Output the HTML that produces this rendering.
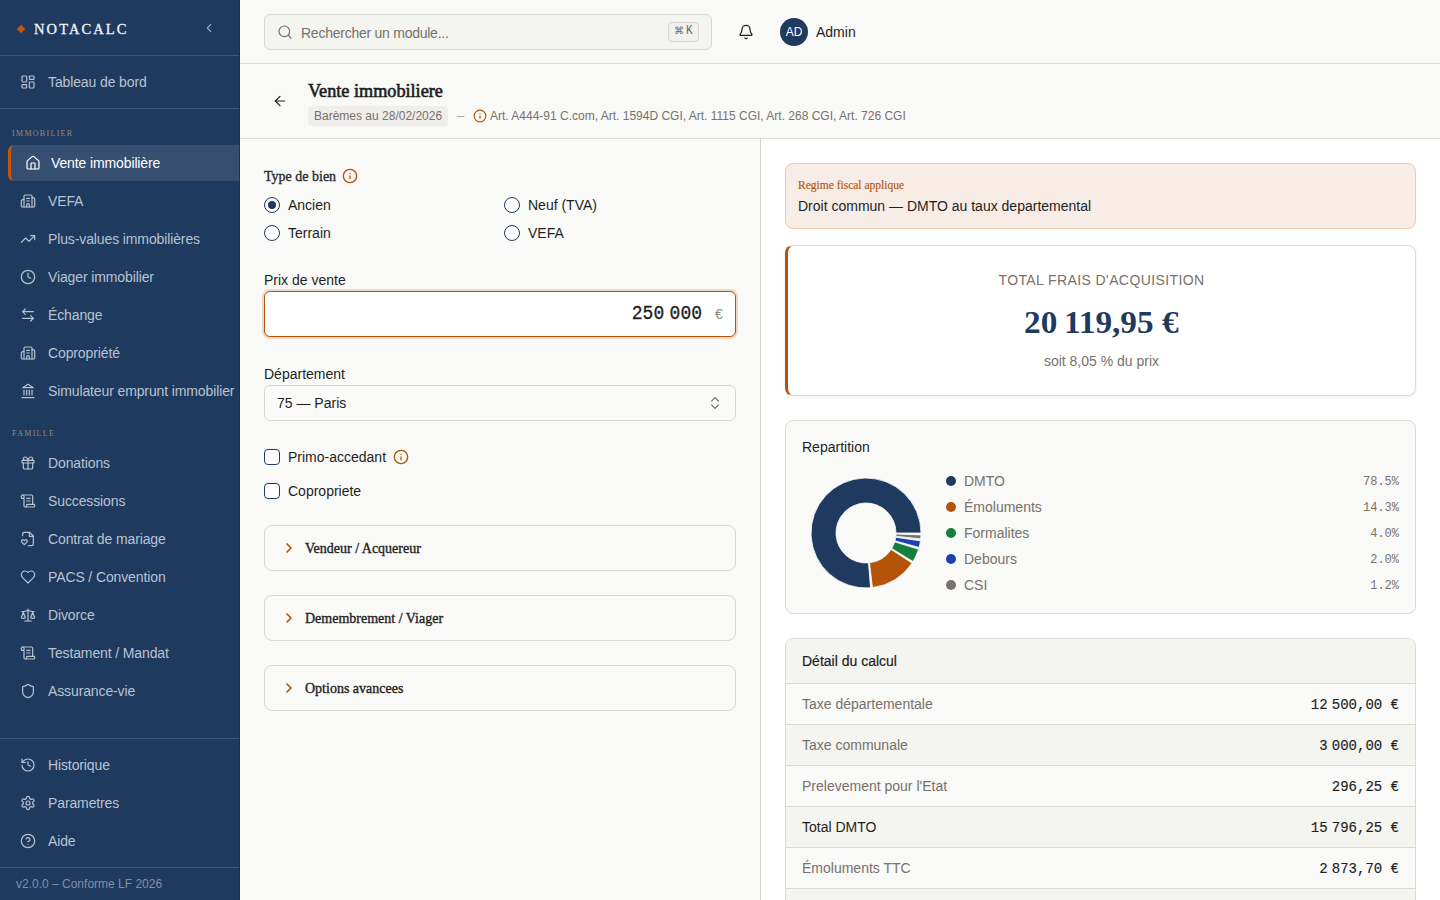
<!DOCTYPE html>
<html lang="fr"><head><meta charset="utf-8"><title>NotaCalc</title>
<style>
*{box-sizing:border-box;margin:0;padding:0}
html,body{width:1440px;height:900px;overflow:hidden}
body{font-family:"Liberation Sans",sans-serif;background:#fafaf8;color:#1f1f1f;position:relative;font-size:14px}
.serif{font-family:"Liberation Serif",serif}
.mono{font-family:"Liberation Mono",monospace}
svg.i{fill:none;stroke:currentColor;stroke-width:2;stroke-linecap:round;stroke-linejoin:round;position:absolute}
.abs{position:absolute;white-space:nowrap}
/* sidebar */
#sb{position:absolute;left:0;top:0;width:240px;height:900px;background:#1e3a5f;color:#b9c3d0}
.hr{position:absolute;left:0;width:239px;height:1px;background:rgba(255,255,255,0.15)}
.nav{position:absolute;left:0;width:240px;height:36px}
.nav svg{left:20px;top:10px;width:16px;height:16px;stroke-width:1.8}
.nav span{position:absolute;left:48px;top:0;line-height:36px;font-size:14px;letter-spacing:-0.12px;white-space:nowrap}
.nav.act{left:8px;width:232px;background:rgba(255,255,255,0.11);border-radius:6px 0 0 6px;border-left:3px solid #c2570c;color:#fff}
.nav.act svg{left:14px}
.nav.act span{left:40px}
.sec{position:absolute;left:12px;font-family:"Liberation Serif",serif;font-size:8px;letter-spacing:1.3px;color:#9a8c78}

.lbl{font-size:14px;line-height:18px;color:#1f1f1f}
.radio{position:absolute;width:16px;height:16px;border:1.5px solid #1e3a5f;border-radius:50%;background:#fff}
.radio.on::after{content:"";position:absolute;left:2.5px;top:2.5px;width:8px;height:8px;border-radius:50%;background:#1e3a5f}
.chk{position:absolute;width:16px;height:16px;border:1.5px solid #1e3a5f;border-radius:4px;background:#fff}
.acc{position:absolute;left:264px;width:472px;height:46px;border:1px solid #d9d7d1;border-radius:8px;background:#f9f9f7}
.acc svg{left:16px;top:14px;width:16px;height:16px;color:#b45309;stroke-width:2.5}
.acc span{position:absolute;left:40px;top:1px;line-height:44px;font-family:"Liberation Serif",serif;font-size:14px;color:#1f1f1f;-webkit-text-stroke:0.35px #1f1f1f;white-space:nowrap}
.leg{position:absolute;left:946px;width:453px;height:18px}
.leg i{position:absolute;left:0;top:4px;width:10px;height:10px;border-radius:50%}
.leg span{position:absolute;left:18px;top:0;font-size:14px;line-height:18px;color:#78716c}
.leg b{position:absolute;right:0;top:1px;font-family:"Liberation Mono",monospace;font-weight:normal;font-size:12px;line-height:18px;color:#78716c}
.row{position:relative;height:41px;border-bottom:1px solid #dcdad4;background:#f9f9f7}
.row.alt{background:#f4f4f0}
.row span{position:absolute;left:16px;top:0;line-height:40px;font-size:14px;color:#78716c}
.row.tot span{color:#1f1f1f}
.row b{position:absolute;right:16px;top:1px;line-height:40px;font-family:"Liberation Mono",monospace;font-weight:normal;font-size:14px;color:#1f1f1f;-webkit-text-stroke:0.15px #1f1f1f}
</style></head>
<body>
<div id="sb">
  <div class="abs" style="left:17px;top:25px;width:8px;height:8px;"><div style="width:6px;height:6px;background:#c2570c;transform:rotate(45deg);margin:1px"></div></div>
  <div class="abs serif" style="left:34px;top:20px;font-size:14.5px;letter-spacing:2.1px;color:#f4f4f4;-webkit-text-stroke:0.3px #f4f4f4;line-height:18px">NOTACALC</div>
  <svg class="i" viewBox="0 0 24 24" style="left:202px;top:21px;width:14px;height:14px;color:#9aa8ba"><path d="m15 18-6-6 6-6"/></svg>
  <div class="hr" style="top:55px"></div>
  <div class="nav" style="top:64px"><svg class="i" viewBox="0 0 24 24"><rect width="7" height="9" x="3" y="3" rx="1"/><rect width="7" height="5" x="14" y="3" rx="1"/><rect width="7" height="9" x="14" y="12" rx="1"/><rect width="7" height="5" x="3" y="16" rx="1"/></svg><span>Tableau de bord</span></div>
  <div class="hr" style="top:108px"></div>
  <div class="sec" style="top:129px">IMMOBILIER</div>
  <div class="nav act" style="top:145px"><svg class="i" viewBox="0 0 24 24"><path d="M15 21v-8a1 1 0 0 0-1-1h-4a1 1 0 0 0-1 1v8"/><path d="M3 10a2 2 0 0 1 .709-1.528l7-5.999a2 2 0 0 1 2.582 0l7 5.999A2 2 0 0 1 21 10v9a2 2 0 0 1-2 2H5a2 2 0 0 1-2-2z"/></svg><span>Vente immobilière</span></div>
  <div class="nav" style="top:183px"><svg class="i" viewBox="0 0 24 24"><path d="M10 12h4"/><path d="M10 8h4"/><path d="M14 21v-3a2 2 0 0 0-4 0v3"/><path d="M6 10H4a2 2 0 0 0-2 2v7a2 2 0 0 0 2 2h16a2 2 0 0 0 2-2V9a2 2 0 0 0-2-2h-2"/><path d="M6 21V5a2 2 0 0 1 2-2h8a2 2 0 0 1 2 2v16"/></svg><span>VEFA</span></div>
  <div class="nav" style="top:221px"><svg class="i" viewBox="0 0 24 24"><polyline points="22 7 13.5 15.5 8.5 10.5 2 17"/><polyline points="16 7 22 7 22 13"/></svg><span>Plus-values immobilières</span></div>
  <div class="nav" style="top:259px"><svg class="i" viewBox="0 0 24 24"><circle cx="12" cy="12" r="10"/><polyline points="12 6 12 12 16 14"/></svg><span>Viager immobilier</span></div>
  <div class="nav" style="top:297px"><svg class="i" viewBox="0 0 24 24"><path d="M8 3 4 7l4 4"/><path d="M4 7h16"/><path d="m16 21 4-4-4-4"/><path d="M20 17H4"/></svg><span>Échange</span></div>
  <div class="nav" style="top:335px"><svg class="i" viewBox="0 0 24 24"><path d="M10 12h4"/><path d="M10 8h4"/><path d="M14 21v-3a2 2 0 0 0-4 0v3"/><path d="M6 10H4a2 2 0 0 0-2 2v7a2 2 0 0 0 2 2h16a2 2 0 0 0 2-2V9a2 2 0 0 0-2-2h-2"/><path d="M6 21V5a2 2 0 0 1 2-2h8a2 2 0 0 1 2 2v16"/></svg><span>Copropriété</span></div>
  <div class="nav" style="top:373px"><svg class="i" viewBox="0 0 24 24"><line x1="3" x2="21" y1="22" y2="22"/><line x1="6" x2="6" y1="18" y2="11"/><line x1="10" x2="10" y1="18" y2="11"/><line x1="14" x2="14" y1="18" y2="11"/><line x1="18" x2="18" y1="18" y2="11"/><polygon points="12 2 20 7 4 7"/></svg><span>Simulateur emprunt immobilier</span></div>
  <div class="sec" style="top:429px">FAMILLE</div>
  <div class="nav" style="top:445px"><svg class="i" viewBox="0 0 24 24"><rect x="3" y="8" width="18" height="4" rx="1"/><path d="M12 8v13"/><path d="M19 12v7a2 2 0 0 1-2 2H7a2 2 0 0 1-2-2v-7"/><path d="M7.5 8a2.5 2.5 0 0 1 0-5A4.8 8 0 0 1 12 8a4.8 8 0 0 1 4.5-5 2.5 2.5 0 0 1 0 5"/></svg><span>Donations</span></div>
  <div class="nav" style="top:483px"><svg class="i" viewBox="0 0 24 24"><path d="M15 12h-5"/><path d="M15 8h-5"/><path d="M19 17V5a2 2 0 0 0-2-2H4"/><path d="M8 21h12a2 2 0 0 0 2-2v-1a1 1 0 0 0-1-1H11a1 1 0 0 0-1 1v1a2 2 0 1 1-4 0V5a2 2 0 1 0-4 0v2a1 1 0 0 0 1 1h3"/></svg><span>Successions</span></div>
  <div class="nav" style="top:521px"><svg class="i" viewBox="0 0 24 24"><path d="M4 7V4a2 2 0 0 1 2-2h8.5L20 7.5V20a2 2 0 0 1-2 2h-5"/><polyline points="14 2 14 8 20 8"/><path d="M10.3 13.7a2.2 2.2 0 0 0-3.1 0l-.7.7-.7-.7a2.2 2.2 0 0 0-3.1 3.1l3.8 3.6 3.8-3.6a2.2 2.2 0 0 0 0-3.1z"/></svg><span>Contrat de mariage</span></div>
  <div class="nav" style="top:559px"><svg class="i" viewBox="0 0 24 24"><path d="M19 14c1.49-1.46 3-3.21 3-5.5A5.5 5.5 0 0 0 16.5 3c-1.76 0-3 .5-4.5 2-1.5-1.5-2.74-2-4.5-2A5.5 5.5 0 0 0 2 8.5c0 2.3 1.5 4.05 3 5.5l7 7Z"/></svg><span>PACS / Convention</span></div>
  <div class="nav" style="top:597px"><svg class="i" viewBox="0 0 24 24"><path d="m16 16 3-8 3 8c-.87.65-1.92 1-3 1s-2.13-.35-3-1Z"/><path d="m2 16 3-8 3 8c-.87.65-1.92 1-3 1s-2.13-.35-3-1Z"/><path d="M7 21h10"/><path d="M12 3v18"/><path d="M3 7h2c2 0 5-1 7-2 2 1 5 2 7 2h2"/></svg><span>Divorce</span></div>
  <div class="nav" style="top:635px"><svg class="i" viewBox="0 0 24 24"><path d="M15 12h-5"/><path d="M15 8h-5"/><path d="M19 17V5a2 2 0 0 0-2-2H4"/><path d="M8 21h12a2 2 0 0 0 2-2v-1a1 1 0 0 0-1-1H11a1 1 0 0 0-1 1v1a2 2 0 1 1-4 0V5a2 2 0 1 0-4 0v2a1 1 0 0 0 1 1h3"/></svg><span>Testament / Mandat</span></div>
  <div class="nav" style="top:673px"><svg class="i" viewBox="0 0 24 24"><path d="M20 13c0 5-3.5 7.5-7.66 8.95a1 1 0 0 1-.67-.01C7.5 20.5 4 18 4 13V6a1 1 0 0 1 1-1c2 0 4.5-1.2 6.240-2.72a1.170 1.170 0 0 1 1.52 0C14.51 3.81 17 5 19 5a1 1 0 0 1 1 1z"/></svg><span>Assurance-vie</span></div>
  <div class="hr" style="top:738px"></div>
  <div class="nav" style="top:747px"><svg class="i" viewBox="0 0 24 24"><path d="M3 12a9 9 0 1 0 9-9 9.75 9.75 0 0 0-6.74 2.74L3 8"/><path d="M3 3v5h5"/><path d="M12 7v5l4 2"/></svg><span>Historique</span></div>
  <div class="nav" style="top:785px"><svg class="i" viewBox="0 0 24 24"><path d="M12.22 2h-.44a2 2 0 0 0-2 2v.18a2 2 0 0 1-1 1.73l-.43.25a2 2 0 0 1-2 0l-.15-.08a2 2 0 0 0-2.73.73l-.22.38a2 2 0 0 0 .73 2.730l.15.1a2 2 0 0 1 1 1.72v.51a2 2 0 0 1-1 1.74l-.15.09a2 2 0 0 0-.73 2.73l.22.38a2 2 0 0 0 2.73.73l.15-.08a2 2 0 0 1 2 0l.43.25a2 2 0 0 1 1 1.73V20a2 2 0 0 0 2 2h.44a2 2 0 0 0 2-2v-.18a2 2 0 0 1 1-1.73l.43-.25a2 2 0 0 1 2 0l.15.08a2 2 0 0 0 2.73-.73l.22-.39a2 2 0 0 0-.73-2.73l-.15-.08a2 2 0 0 1-1-1.74v-.5a2 2 0 0 1 1-1.74l.15-.09a2 2 0 0 0 .73-2.73l-.22-.38a2 2 0 0 0-2.73-.73l-.15.08a2 2 0 0 1-2 0l-.43-.25a2 2 0 0 1-1-1.73V4a2 2 0 0 0-2-2z"/><circle cx="12" cy="12" r="3"/></svg><span>Parametres</span></div>
  <div class="nav" style="top:823px"><svg class="i" viewBox="0 0 24 24"><circle cx="12" cy="12" r="10"/><path d="M9.09 9a3 3 0 0 1 5.83 1c0 2-3 3-3 3"/><path d="M12 17h.01"/></svg><span>Aide</span></div>
  <div class="hr" style="top:867px"></div>
  <div class="abs" style="left:16px;top:876px;font-size:12px;line-height:16px;color:#8190a5">v2.0.0 – Conforme LF 2026</div>
  <div class="abs" style="left:239px;top:0;width:1px;height:900px;background:#1a3352"></div>
</div>

<!-- top header -->
<div class="abs" style="left:240px;top:0;width:1200px;height:64px;background:#f9f9f7;border-bottom:1px solid #dcdad4"></div>
<div class="abs" style="left:264px;top:14px;width:448px;height:36px;border:1px solid #d9d7d1;border-radius:6px;background:#f4f4f0"></div>
<svg class="i" viewBox="0 0 24 24" style="left:277px;top:24px;width:16px;height:16px;color:#78716c;stroke-width:1.8"><circle cx="11" cy="11" r="8"/><path d="m21 21-4.3-4.3"/></svg>
<div class="abs" style="left:301px;top:24px;font-size:14px;line-height:18px;letter-spacing:-0.25px;color:#78716c">Rechercher un module...</div>
<div class="abs" style="left:668px;top:22px;width:31px;height:20px;border:1px solid #d6d3ce;border-radius:4px;background:#f2f1ed"></div><div class="abs" style="left:674px;top:24px;font-size:10px;line-height:14px;color:#6b655f">⌘</div><div class="abs mono" style="left:686px;top:24px;font-size:11px;line-height:14px;color:#6b655f;transform:scaleY(1.15)">K</div>
<svg class="i" viewBox="0 0 24 24" style="left:738px;top:24px;width:16px;height:16px;color:#1f1f1f;stroke-width:1.8"><path d="M10.268 21a2 2 0 0 0 3.464 0"/><path d="M3.262 15.326A1 1 0 0 0 4 17h16a1 1 0 0 0 .74-1.673C19.41 13.956 18 12.499 18 8A6 6 0 0 0 6 8c0 4.499-1.411 5.956-2.738 7.326"/></svg>
<div class="abs" style="left:780px;top:18px;width:28px;height:28px;border-radius:50%;background:#1e3a5f;color:#fff;font-size:12px;line-height:28px;text-align:center">AD</div>
<div class="abs" style="left:816px;top:23px;font-size:14px;line-height:18px;color:#1f1f1f">Admin</div>
<!-- page header -->
<div class="abs" style="left:240px;top:64px;width:1200px;height:75px;background:#f9f9f7;border-bottom:1px solid #dcdad4"></div>
<svg class="i" viewBox="0 0 24 24" style="left:272px;top:93px;width:16px;height:16px;color:#1f1f1f;stroke-width:1.8"><path d="m12 19-7-7 7-7"/><path d="M19 12H5"/></svg>
<div class="abs serif" style="left:308px;top:80px;font-size:18.2px;line-height:22px;-webkit-text-stroke:0.6px #1c1c1c;color:#1c1c1c">Vente immobiliere</div>
<div class="abs" style="left:308px;top:106px;width:140px;height:20px;background:#efeeea;border-radius:4px;font-size:12px;line-height:20px;color:#78716c;padding-left:6px">Barèmes au 28/02/2026</div>
<div class="abs" style="left:457px;top:106px;font-size:13px;line-height:20px;color:#a8a29e">–</div>
<svg class="i" viewBox="0 0 24 24" style="left:473px;top:109px;width:14px;height:14px;color:#b45309"><circle cx="12" cy="12" r="10"/><path d="M12 16v-4"/><path d="M12 8h.01"/></svg>
<div class="abs" style="left:490px;top:106px;font-size:12px;line-height:20px;color:#78716c">Art. A444-91 C.com, Art. 1594D CGI, Art. 1115 CGI, Art. 268 CGI, Art. 726 CGI</div>
<!-- left panel -->
<div class="abs" style="left:240px;top:139px;width:520px;height:761px;background:#f9f9f7"></div>
<div class="abs" style="left:760px;top:139px;width:1px;height:761px;background:#d6d3ce"></div>
<div class="abs" style="left:761px;top:139px;width:679px;height:761px;background:#ffffff"></div>

<div class="abs serif" style="left:264px;top:168px;font-size:14px;line-height:18px;-webkit-text-stroke:0.35px #2a2a2a;color:#2a2a2a">Type de bien</div>
<svg class="i" viewBox="0 0 24 24" style="left:342px;top:168px;width:16px;height:16px;color:#b45309;stroke-width:2"><circle cx="12" cy="12" r="10"/><path d="M12 16v-4"/><path d="M12 8h.01"/></svg>
<div class="radio on" style="left:264px;top:197px"></div><div class="abs lbl" style="left:288px;top:196px">Ancien</div>
<div class="radio" style="left:504px;top:197px"></div><div class="abs lbl" style="left:528px;top:196px">Neuf (TVA)</div>
<div class="radio" style="left:264px;top:225px"></div><div class="abs lbl" style="left:288px;top:224px">Terrain</div>
<div class="radio" style="left:504px;top:225px"></div><div class="abs lbl" style="left:528px;top:224px">VEFA</div>

<div class="abs lbl" style="left:264px;top:271px">Prix de vente</div>
<div class="abs" style="left:264px;top:291px;width:472px;height:46px;background:#fff;border:1.5px solid #b45309;border-radius:6px;box-shadow:0 0 0 2px rgba(180,83,9,0.2)"></div>
<div class="abs mono" style="right:738px;top:303px;font-size:18px;line-height:22px;color:#1f1f1f;-webkit-text-stroke:0.3px #1f1f1f;transform:scaleY(1.12);transform-origin:50% 60%">250&#x202F;000</div>
<div class="abs" style="left:715px;top:305px;font-size:14px;line-height:18px;color:#8a847d">€</div>

<div class="abs lbl" style="left:264px;top:365px">Département</div>
<div class="abs" style="left:264px;top:385px;width:472px;height:36px;background:#fafaf8;border:1px solid #d9d7d1;border-radius:6px"></div>
<div class="abs lbl" style="left:277px;top:394px">75 — Paris</div>
<svg class="i" viewBox="0 0 24 24" style="left:707px;top:395px;width:16px;height:16px;color:#6f6a64;stroke-width:1.6"><path d="m7 15 5 5 5-5"/><path d="m7 9 5-5 5 5"/></svg>

<div class="chk" style="left:264px;top:449px"></div><div class="abs lbl" style="left:288px;top:448px">Primo-accedant</div>
<svg class="i" viewBox="0 0 24 24" style="left:393px;top:449px;width:16px;height:16px;color:#b45309;stroke-width:2"><circle cx="12" cy="12" r="10"/><path d="M12 16v-4"/><path d="M12 8h.01"/></svg>
<div class="chk" style="left:264px;top:483px"></div><div class="abs lbl" style="left:288px;top:482px">Copropriete</div>

<div class="acc" style="top:525px"><svg class="i" viewBox="0 0 24 24"><path d="m9 18 6-6-6-6"/></svg><span>Vendeur / Acquereur</span></div>
<div class="acc" style="top:595px"><svg class="i" viewBox="0 0 24 24"><path d="m9 18 6-6-6-6"/></svg><span>Demembrement / Viager</span></div>
<div class="acc" style="top:665px"><svg class="i" viewBox="0 0 24 24"><path d="m9 18 6-6-6-6"/></svg><span>Options avancees</span></div>

<!-- right panel -->
<div class="abs" style="left:785px;top:163px;width:631px;height:66px;background:#f8ece6;border:1px solid #eccab3;border-radius:8px"></div>
<div class="abs serif" style="left:798px;top:177px;font-size:11.5px;line-height:16px;-webkit-text-stroke:0.15px #b45309;color:#b45309">Regime fiscal applique</div>
<div class="abs" style="left:798px;top:197px;font-size:14px;line-height:18px;color:#1f1f1f">Droit commun — DMTO au taux departemental</div>

<div class="abs" style="left:785px;top:245px;width:631px;height:151px;background:#fff;border:1px solid #dedcd6;border-left:3px solid #b45309;border-radius:8px;box-shadow:0 1px 3px rgba(0,0,0,0.08)"></div>
<div class="abs" style="left:787px;top:272px;width:629px;text-align:center;font-size:14px;line-height:16px;letter-spacing:0.4px;color:#78716c">TOTAL FRAIS D'ACQUISITION</div>
<div class="abs serif" style="left:787px;top:304px;width:629px;text-align:center;font-size:32px;line-height:36px;font-weight:bold;color:#1e3a5f"><span style="display:inline-block;transform:scaleX(1.04)">20&#x202F;119,95 €</span></div>
<div class="abs" style="left:787px;top:352px;width:629px;text-align:center;font-size:14px;line-height:18px;color:#78716c">soit 8,05 % du prix</div>

<div class="abs" style="left:785px;top:420px;width:631px;height:194px;background:#f9f9f7;border:1px solid #dcdad4;border-radius:8px"></div>
<div class="abs" style="left:802px;top:438px;font-size:14px;line-height:18px;color:#1f1f1f">Repartition</div>
<svg class="abs" style="left:785px;top:420px;width:200px;height:194px" viewBox="0 0 200 194">
<g stroke="#ffffff" stroke-width="0.8">
<path d="M136.00 113.00A55 55 0 1 0 85.55 167.81L83.48 142.90A30 30 0 1 1 111.00 113.00Z" fill="#1e3a5f"/>
<path d="M87.46 167.62A55 55 0 0 0 127.02 143.12L106.10 129.43A30 30 0 0 1 84.53 142.79Z" fill="#b45309"/>
<path d="M128.05 141.49A55 55 0 0 0 133.54 129.26L109.66 121.87A30 30 0 0 1 106.66 128.54Z" fill="#15803d"/>
<path d="M134.08 127.42A55 55 0 0 0 135.44 120.84L110.69 117.28A30 30 0 0 1 109.95 120.87Z" fill="#1e40af"/>
<path d="M135.68 118.94A55 55 0 0 0 135.97 114.92L110.98 114.05A30 30 0 0 1 110.82 116.24Z" fill="#78716c"/>
</g></svg>
<div class="leg" style="top:472px"><i style="background:#1e3a5f"></i><span>DMTO</span><b>78.5%</b></div>
<div class="leg" style="top:498px"><i style="background:#b45309"></i><span>Émoluments</span><b>14.3%</b></div>
<div class="leg" style="top:524px"><i style="background:#15803d"></i><span>Formalites</span><b>4.0%</b></div>
<div class="leg" style="top:550px"><i style="background:#1e40af"></i><span>Debours</span><b>2.0%</b></div>
<div class="leg" style="top:576px"><i style="background:#78716c"></i><span>CSI</span><b>1.2%</b></div>

<div class="abs" style="left:785px;top:638px;width:631px;height:300px;background:#f9f9f7;border:1px solid #dcdad4;border-radius:8px;overflow:hidden">
  <div style="height:45px;background:#f4f4f0;border-bottom:1px solid #dcdad4;padding-left:16px;font-size:14px;line-height:44px;color:#1f1f1f;-webkit-text-stroke:0.2px #1f1f1f">Détail du calcul</div>
  <div class="row"><span>Taxe départementale</span><b>12&#x202F;500,00 €</b></div>
  <div class="row alt"><span>Taxe communale</span><b>3&#x202F;000,00 €</b></div>
  <div class="row"><span>Prelevement pour l'Etat</span><b>296,25 €</b></div>
  <div class="row alt tot"><span>Total DMTO</span><b>15&#x202F;796,25 €</b></div>
  <div class="row"><span>Émoluments TTC</span><b>2&#x202F;873,70 €</b></div>
  <div class="row alt"><span>Formalites</span><b>800,00 €</b></div>
</div>

</body></html>
